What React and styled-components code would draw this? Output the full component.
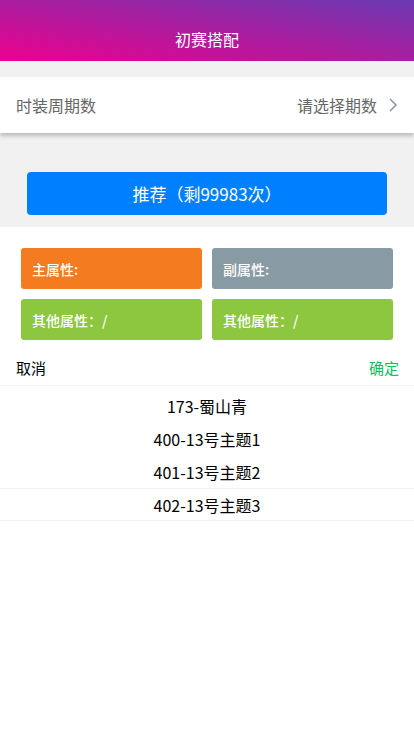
import React from "react";
import styled, { createGlobalStyle } from "styled-components";

const GlobalStyle = createGlobalStyle`
  html, body {
    margin: 0;
    padding: 0;
    background: #ffffff;
    font-family: "Noto Sans CJK SC", "Liberation Sans", sans-serif;
  }
`;

const Page = styled.div`
  width: 414px;
  min-height: 735px;
  background: #ffffff;
`;

const Header = styled.div`
  height: 61px;
  background: linear-gradient(to top right, #ec008c, #6a3ab2);
  color: #ffffff;
  font-size: 16px;
  display: flex;
  align-items: flex-end;
  justify-content: center;
  padding-bottom: 10px;
  box-sizing: border-box;
`;

const GraySection = styled.div`
  background: #f1f1f1;
  padding-top: 16px;
  padding-bottom: 12px;
`;

const SelectRow = styled.div`
  height: 56px;
  background: #ffffff;
  display: flex;
  align-items: center;
  justify-content: space-between;
  padding: 0 16px;
  box-shadow: 0 3px 4px rgba(0, 0, 0, 0.22);
  font-size: 16px;
  color: #666666;
`;

const RowValue = styled.div`
  display: flex;
  align-items: center;
  gap: 11px;
`;

const ButtonWrap = styled.div`
  padding: 39px 27px 0;
`;

const RecommendButton = styled.button`
  width: 100%;
  height: 43px;
  border: none;
  border-radius: 4px;
  background: #0080ff;
  color: #ffffff;
  font-family: inherit;
  font-size: 17px;
  display: flex;
  align-items: center;
  justify-content: center;
  padding: 0;
`;

const AttrGrid = styled.div`
  display: grid;
  grid-template-columns: 1fr 1fr;
  gap: 10px;
  padding: 21px 21px 10px;
`;

const AttrCard = styled.div`
  height: 41px;
  border-radius: 3px;
  background: ${(props) => props.color};
  color: #ffffff;
  font-size: 14px;
  font-weight: 500;
  display: flex;
  align-items: center;
  padding-left: 11px;
`;

const Toolbar = styled.div`
  height: 35px;
  display: flex;
  align-items: center;
  justify-content: space-between;
  padding: 0 15px 0 16px;
  border-bottom: 1px solid #f2f2f2;
  font-size: 15px;
`;

const ToolButton = styled.span`
  color: ${(props) => (props.confirm ? "#07c160" : "#000000")};
`;

const Column = styled.div`
  padding-top: 3px;
`;

const Option = styled.div`
  height: 33px;
  display: flex;
  align-items: center;
  justify-content: center;
  font-size: 16px;
  color: #000000;
  box-sizing: border-box;
  border-top: ${(props) => (props.selected ? "1px solid #f0f0f0" : "none")};
  border-bottom: ${(props) => (props.selected ? "1px solid #f0f0f0" : "none")};
`;

const Chevron = () => (
  <svg width="10" height="16" viewBox="0 0 10 16">
    <path d="M2 2 L8 8 L2 14" fill="none" stroke="#8a9aa3" strokeWidth="1.6" />
  </svg>
);

const options = ["173-蜀山青", "400-13号主题1", "401-13号主题2", "402-13号主题3"];

const App = () => {
  return (
    <Page>
      <GlobalStyle />
      <Header>初赛搭配</Header>
      <GraySection>
        <SelectRow>
          <span>时装周期数</span>
          <RowValue>
            <span>请选择期数</span>
            <Chevron />
          </RowValue>
        </SelectRow>
        <ButtonWrap>
          <RecommendButton>推荐（剩99983次）</RecommendButton>
        </ButtonWrap>
      </GraySection>
      <AttrGrid>
        <AttrCard color="#f47b20">主属性:</AttrCard>
        <AttrCard color="#889aa3">副属性:</AttrCard>
        <AttrCard color="#8dc63f">其他属性：/</AttrCard>
        <AttrCard color="#8dc63f">其他属性：/</AttrCard>
      </AttrGrid>
      <Toolbar>
        <ToolButton>取消</ToolButton>
        <ToolButton confirm>确定</ToolButton>
      </Toolbar>
      <Column>
        {options.map((o, i) => (
          <Option key={o} selected={i === 3}>{o}</Option>
        ))}
      </Column>
    </Page>
  );
};

export default App;
